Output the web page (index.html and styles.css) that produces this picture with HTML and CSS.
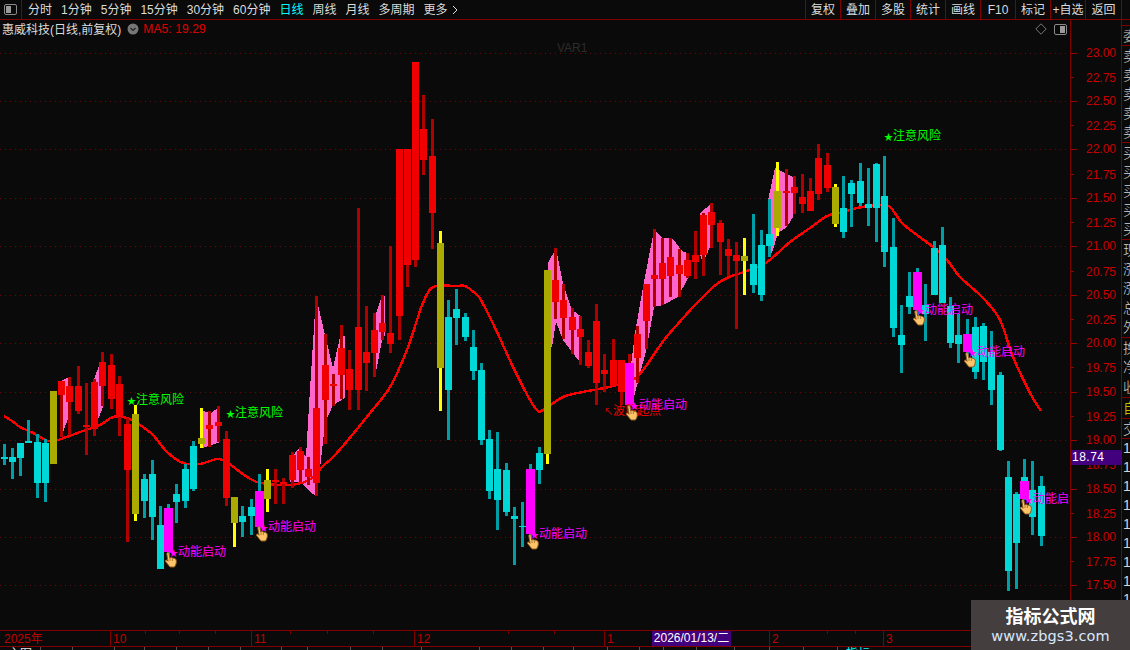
FILE: index.html
```html
<!DOCTYPE html>
<html lang="zh-CN">
<head>
<meta charset="utf-8">
<title>惠威科技 日线</title>
<link rel="stylesheet" href="styles.css">
</head>
<body>
<div class="app">
  <header class="toolbar">
    <div class="tb-icon">
      <svg class="panel-icon" viewBox="0 0 13 11"><rect x="0.5" y="0.5" width="12" height="10" rx="1.5" fill="none" stroke="#8a8a8a"/><rect x="2" y="2" width="5" height="7" fill="#9a9a9a"/></svg>
    </div>
    <nav class="periods">
      <span>分时</span><span>1分钟</span><span>5分钟</span><span>15分钟</span><span>30分钟</span><span>60分钟</span><span class="active">日线</span><span>周线</span><span>月线</span><span>多周期</span><span>更多 <svg class="more" viewBox="0 0 6 10"><path d="M1 1l4 4-4 4" fill="none" stroke="#ddd"/></svg></span>
    </nav>
    <nav class="actions">
      <span>复权</span><span>叠加</span><span>多股</span><span>统计</span><span>画线</span><span>F10</span><span>标记</span><span>+自选</span><span>返回</span>
    </nav>
  </header>

  <main class="main">
    <section class="chart">
      <svg id="plot" class="plot" viewBox="0 20 1070 610" shape-rendering="crispEdges">
        <defs>
          <g id="hand">
            <path d="M3 1C3.8 0 5 .4 5 1.5L5.6 6 7 5.6 8.4 6 10 6.2 11.6 7C12.6 8 12.6 11 11.6 13L10.5 15H6L4 12.5 1.5 9.5C1 8.5 2 7.5 3 8.3L4 9.3 2.8 2Z" fill="#ffc46a" stroke="#8a5a20" shape-rendering="auto"/>
            <path d="M6 6.5V9M8.4 6.5V9" stroke="#b07830" fill="none" shape-rendering="auto"/>
          </g>
        </defs>
        <g id="layer-back"></g>
        <g id="layer-candles"></g>
        <g class="labels" text-rendering="auto">
          <text class="var">VAR1</text>
          <text class="risk lb1"><tspan class="star">★</tspan>注意风险</text>
          <text class="risk lb2"><tspan class="star">★</tspan>注意风险</text>
          <text class="risk lb3"><tspan class="star">★</tspan>注意风险</text>
          <text class="wave"><tspan class="arrow">↖</tspan>波段起点</text>
          <text class="power lp1"><tspan class="star">★</tspan>动能启动</text>
          <text class="power lp2"><tspan class="star">★</tspan>动能启动</text>
          <text class="power lp3"><tspan class="star">★</tspan>动能启动</text>
          <text class="power lp4"><tspan class="star">★</tspan>动能启动</text>
          <text class="power lp5"><tspan class="star">★</tspan>动能启动</text>
          <text class="power lp6"><tspan class="star">★</tspan>动能启动</text>
          <text class="power lp7"><tspan class="star">★</tspan>动能启动</text>
        </g>
        <g id="layer-hands"></g>
      </svg>
      <div class="legend">
        <span class="name">惠威科技(日线,前复权)</span>
        <svg class="chev" viewBox="0 0 12 12"><circle cx="6" cy="6" r="5.5" fill="#777"/><path d="M3.5 5l2.5 2.5L8.5 5" fill="none" stroke="#222" stroke-width="1.2"/></svg>
        <span class="ma">MA5: 19.29</span>
      </div>
      <div class="corner-tools">
        <svg class="diamond" viewBox="0 0 12 12"><path d="M6 .8L11.2 6 6 11.2.8 6Z" fill="none" stroke="#777"/></svg>
        <svg class="panel-icon" viewBox="0 0 13 11"><rect x="0.5" y="0.5" width="12" height="10" rx="1.5" fill="none" stroke="#8a8a8a"/><rect x="6" y="2" width="5" height="7" fill="#9a9a9a"/></svg>
      </div>
    </section>

    <section class="axis">
      <svg id="axis" class="axis-svg" viewBox="1070 20 51 610" shape-rendering="crispEdges"></svg>
      <div class="last-price">18.74</div>
    </section>

    <aside class="quotes">
      <div class="q q0"></div>
      <div class="q q1"><span>委比</span></div>
      <div class="q q2"><span>卖五</span><span>卖四</span><span>卖三</span><span>卖二</span><span>卖一</span></div>
      <div class="q q3"><span>买一</span><span>买二</span><span>买三</span><span>买四</span><span>买五</span></div>
      <div class="q q4"><span>现价</span><span>涨跌</span><span>涨幅</span><span>总手</span><span>外盘</span></div>
      <div class="q q5"><span>换手</span><span>净资</span><span>收益</span></div>
      <div class="q q6 yellow"><span>自选</span></div>
      <div class="q q7"><span>交易</span></div>
      <div class="q q8"><span>14</span><span>14</span><span>14</span><span>14</span><span>14</span><span>14</span><span>14</span><span>14</span><span>14</span></div>
    </aside>
  </main>

  <footer class="timebar">
    <svg class="time-ticks" viewBox="0 0 1130 4" shape-rendering="crispEdges"><path d="M145 0v3M179 0v3M215 0v3M290 0v3M327 0v3M373 0v3M508 0v3M554 0v3M827 0v3M855 0v3" stroke="#800000"/></svg>
    <span class="m m-y">2025年</span>
    <span class="m m-10">10</span>
    <span class="m m-11">11</span>
    <span class="m m-12">12</span>
    <span class="m m-1">1</span>
    <span class="m-date">2026/01/13/二</span>
    <span class="m m-gap"></span>
    <span class="m m-2">2</span>
    <span class="m m-3">3</span>
  </footer>
  <div class="tabs">
    <span class="t w41">主图</span><span class="t w32"></span><span class="t w42"></span><span class="t w30"></span><span class="t w32"></span><span class="t w32"></span><span class="t w32"></span><span class="t w41"></span><span class="t w26"></span><span class="t w43"></span><span class="t w32"></span><span class="t w39"></span><span class="t w58"></span><span class="t w32"></span><span class="t w32"></span><span class="t w30"></span><span class="t w34"></span><span class="t w32"></span><span class="t w24"></span><span class="t w33"></span><span class="t w38"></span><span class="t w35"></span><span class="t w34"></span><span class="t w34"></span><span class="t cy">指标</span>
  </div>

  <div class="watermark">
    <strong>指标公式网</strong>
    <span>www.zbgs3.com</span>
  </div>
</div>
<script src="script.js"></script>
</body>
</html>
```

FILE: styles.css
```css
* { box-sizing: border-box; }
html, body { margin: 0; padding: 0; background: #0a0a0a; }
body {
  width: 1130px; height: 650px; overflow: hidden;
  font: 12px "Liberation Sans", "Noto Sans CJK SC", sans-serif;
  color: #dcdcdc;
}
.app { position: relative; display: flex; flex-direction: column; width: 1130px; height: 650px; background: #0a0a0a; }

.toolbar { display: flex; height: 20px; flex: none; border-bottom: 1px solid #800000; line-height: 20px; }
.tb-icon { width: 22px; border-right: 1px solid #800000; display: flex; align-items: center; justify-content: center; }
.panel-icon { width: 13px; height: 11px; display: block; }
.periods { display: flex; gap: 9px; padding-left: 6px; white-space: nowrap; }
.periods .active { color: #00ffff; }
.more { width: 6px; height: 10px; margin-left: 1px; vertical-align: -1px; }
.actions { display: flex; margin-left: auto; margin-right: 8px; }
.actions span { width: 35px; text-align: center; border-left: 1px solid #800000; white-space: nowrap; }
.actions span:last-child { width: 37px; border-right: 1px solid #800000; }

.main { display: flex; height: 610px; flex: none; }
.chart { position: relative; width: 1070px; flex: none; overflow: hidden; }
.plot { display: block; width: 1070px; height: 610px; }
.legend { position: absolute; left: 2px; top: 0; display: flex; align-items: center; height: 17px; white-space: nowrap; }
.chev { width: 12px; height: 12px; margin-left: 6px; }
.ma { margin-left: 4px; color: #e00000; letter-spacing: .1px; }
.corner-tools { position: absolute; right: 3px; top: 3px; display: flex; align-items: center; gap: 7px; }
.diamond { width: 12px; height: 12px; }

.labels text { font-family: "Liberation Sans", "Noto Sans CJK SC", sans-serif; font-size: 12px; }
.labels .star { font-family: "Noto Sans CJK SC", sans-serif; font-size: 9px; }
.labels .arrow { font-size: 9px; }
.var { fill: #2c2c2c; transform: translate(557px, 52px); }
.risk { fill: #00ff00; }
.power { fill: #ff00ff; }
.wave { fill: #f00000; transform: translate(604px, 415px); }
.lb1 { transform: translate(127px, 404px); }
.lb2 { transform: translate(226px, 417px); }
.lb3 { transform: translate(884px, 140px); }
.lp1 { transform: translate(169px, 556px); }
.lp2 { transform: translate(259px, 531px); }
.lp3 { transform: translate(530px, 538px); }
.lp4 { transform: translate(630px, 409px); }
.lp5 { transform: translate(916px, 314px); }
.lp6 { transform: translate(968px, 356px); }
.lp7 { transform: translate(1024px, 503px); }

.axis { position: relative; width: 52px; flex: none; border-left: 1px solid #800000; border-right: 1px solid #800000; }
.axis-svg { display: block; width: 51px; height: 610px; }
.axis-svg text { font-family: "Liberation Sans", sans-serif; font-size: 12px; fill: #c80000; }
.last-price { position: absolute; left: 0; right: 0; top: 430px; height: 15px; background: #42007e; color: #fff; line-height: 15px; padding-left: 1px; letter-spacing: .5px; }

.quotes { width: 8px; flex: none; overflow: hidden; display: flex; flex-direction: column; font-size: 14px; color: #d4d4d4; white-space: nowrap; font-weight: 300; }
.q { display: flex; flex-direction: column; justify-content: space-around; border-bottom: 1px solid #800000; overflow: hidden; line-height: 16px; padding-left: 1px; flex: none; }
.q0 { height: 6px; }
.q1 { height: 20px; }
.q2, .q3 { height: 97px; }
.q4 { height: 98px; }
.q5 { height: 60px; }
.q6 { height: 21px; }
.q7 { height: 20px; }
.q8 { height: 170px; border-bottom: 0; }
.yellow { color: #e0e000; }

.timebar { position: relative; display: flex; height: 17px; flex: none; border-top: 1px solid #800000; border-bottom: 1px solid #800000; line-height: 16px; color: #c00000; }
.time-ticks { position: absolute; left: 0; top: 0; width: 1130px; height: 4px; }
.m { display: block; padding-left: 2px; border-left: 1px solid #800000; flex: none; }
.m-y { width: 110px; border-left: 0; padding-left: 4px; }
.m-10 { width: 141px; }
.m-11 { width: 163px; }
.m-12 { width: 190px; }
.m-1 { width: 48px; }
.m-date { width: 79px; flex: none; background: #42007e; color: #fff; text-align: center; white-space: nowrap; overflow: hidden; line-height: 15px; }
.m-gap { width: 38px; border-left: 0; }
.m-2 { width: 114px; }
.m-3 { width: 88px; }

.tabs { display: flex; height: 3px; flex: none; overflow: hidden; font-size: 12px; line-height: 14px; color: #e6e6e6; }
.t { border-right: 1px solid #555; flex: none; padding-left: 8px; overflow: hidden; }
.t.cy { color: #00ffff; border-right: 0; }
.w24 { width: 24px; } .w26 { width: 26px; } .w30 { width: 30px; } .w32 { width: 32px; } .w33 { width: 33px; }
.w34 { width: 34px; } .w35 { width: 35px; } .w38 { width: 38px; } .w39 { width: 39px; } .w41 { width: 41px; }
.w42 { width: 42px; } .w43 { width: 43px; } .w58 { width: 58px; }

.watermark { position: absolute; left: 971px; top: 600px; width: 159px; height: 50px; background: #443e3e; display: flex; flex-direction: column; align-items: center; padding-top: 3px; color: #fff; }
.watermark strong { font: 700 18px/24px "Noto Sans CJK SC", sans-serif; color: #fff; }
.watermark span { font: 14.5px/18px "DejaVu Sans", sans-serif; color: #d8e8ff; letter-spacing: .1px; }
```

FILE: script.js
```js
// [centre x, wick top, wick bottom, body top, body bottom, kind]
// kinds: r red, c cyan, o olive with yellow wick, m magenta with teal wick, n magenta with red wick
var CANDLES = [
[4.7,444,465,457,459,'c'],[12.3,448,479,457,462,'c'],[20.3,443,476,443,458,'c'],[28.3,420,443,441,443,'c'],
[37.3,434,498,442,483,'c'],[45.3,439,502,443,483,'c'],[53.3,391,464,391,464,'o'],[61.3,381,437,381,395,'r'],
[69.3,377,435,386,402,'r'],[78.3,366,414,386,411,'r'],[86.3,383,455,425,427,'r'],[94.3,379,436,382,429,'r'],
[102.3,352,406,362,386,'r'],[111.3,354,409,365,399,'r'],[119.3,376,436,384,417,'r'],[127.3,418,542,424,470,'r'],
[135.3,405,521,414,514,'o'],[144.3,474,518,479,501,'c'],[152.3,460,540,474,517,'c'],[160.3,506,569,525,569,'c'],
[168.5,504,560,508,552,'m'],[176.3,484,523,494,502,'c'],[185.3,464,508,469,501,'c'],[193.3,441,491,446,489,'c'],
[201.3,408,448,438,444,'o'],[209.3,411,447,425,429,'r'],[218.3,406,442,422,426,'r'],[226.3,431,506,439,498,'r'],
[234.3,497,547,497,523,'o'],[242.3,506,537,516,522,'c'],[251.3,499,535,507,516,'c'],[259.5,474,527,491,527,'m'],
[267.3,469,512,480,499,'o'],[275.3,469,504,480,482,'r'],[283.3,478,504,482,484,'r'],[292.3,452,488,455,480,'r'],
[300.3,447,482,451,470,'r'],[308.3,457,485,469,477,'r'],[316.3,296,496,408,483,'r'],[325.3,334,444,365,400,'r'],
[333.3,374,406,384,386,'r'],[341.3,325,399,348,375,'r'],[349.3,350,410,369,390,'r'],[358.3,208,410,327,390,'r'],
[366.3,306,391,352,363,'r'],[374.3,313,377,330,353,'r'],[382.3,295,340,323,332,'r'],[390.3,246,353,333,344,'r'],
[399,149,340,149,316,'r'],[407,149,287,149,265,'r'],[415,62,267,62,260,'r'],[423,95,175,129,160,'r'],
[432.5,119,249,156,213,'r'],[440.5,231,411,243,368,'o'],[448.5,300,440,317,390,'c'],[456.5,289,345,309,318,'c'],
[465.5,313,341,317,337,'c'],[473.5,330,380,347,371,'c'],[481.5,363,445,370,440,'c'],[489.5,430,499,439,491,'c'],
[497.5,432,530,469,500,'c'],[506.5,463,516,470,512,'c'],[514.5,507,565,516,519,'c'],[522.5,502,547,526,527,'c'],
[530.5,464,540,469,534,'m'],[539.5,447,484,453,470,'c'],[547.5,270,464,270,454,'o'],[555.7,248,319,280,302,'r'],
[563.3,284,339,300,318,'r'],[572.3,308,354,317,330,'r'],[580.3,316,365,329,337,'r'],[588.3,340,368,352,366,'r'],
[596.3,304,405,321,383,'r'],[604.3,354,392,370,374,'r'],[613.3,339,386,360,386,'r'],[621.3,360,405,360,392,'r'],
[629.3,354,412,363,405,'n'],[637.3,326,383,334,358,'r'],[646.3,284,349,284,321,'r'],[654.3,229,307,275,279,'r'],
[662.3,238,305,263,279,'r'],[670.3,238,297,257,276,'r'],[679.3,249,297,265,274,'r'],[687.3,253,278,260,276,'r'],
[695.3,231,279,255,262,'r'],[703.3,213,276,215,255,'r'],[711.3,203,248,212,225,'r'],[720.3,220,275,223,242,'r'],
[728.3,239,276,249,256,'r'],[736.3,242,329,255,261,'r'],[744.3,238,295,256,261,'o'],[753.3,214,293,264,285,'c'],
[761.3,230,301,245,295,'c'],[769.3,199,257,234,246,'c'],[777.3,162,236,191,228,'o'],[786.3,169,226,191,193,'r'],
[794.3,176,214,187,193,'r'],[802.3,174,213,197,204,'r'],[810.3,178,211,191,211,'r'],[818.3,144,200,158,194,'r'],
[827.3,153,192,165,188,'r'],[835.3,184,227,187,224,'o'],[843.3,176,238,208,232,'c'],[851.3,180,227,183,194,'c'],
[860.3,163,206,181,203,'c'],[868.3,168,226,204,208,'c'],[876.3,163,242,164,208,'c'],[884.3,156,267,196,252,'c'],
[893.3,218,337,247,328,'c'],[901.3,305,373,335,345,'c'],[909.3,272,314,296,307,'c'],[917.3,268,320,272,310,'m'],
[925.3,284,341,305,314,'c'],[934.3,241,295,248,295,'c'],[942.3,227,303,245,303,'c'],[950.3,297,348,306,343,'c'],
[958.3,314,363,335,344,'c'],[967.5,319,360,334,352,'m'],[975.3,317,379,327,372,'c'],[983.3,323,380,326,362,'c'],
[991.3,331,405,352,390,'c'],[1000.3,372,451,375,450,'c'],[1008.3,461,591,477,571,'c'],[1016.3,492,589,494,543,'c'],
[1024.3,459,500,477,499,'c'],[1024.5,481,499,481,499,'m'],[1032.3,461,535,490,517,'c'],[1041.3,476,546,486,536,'c']
];

var PINK = [
'61,381 69,377 70,378 70,414 61,437',
'94,379 102,358 103,358 103,407 94,430',
'203,411 211,413 219,407 220,407 220,442 211,445 203,448',
'290,459 295,453 300,447 306,457 309,405 316,296 325,335 333,368 340,337 345,336 345,398 333,405 325,423 317,496 311,493 300,482 290,482',
'373,322 382,296 385,296 385,335 382,340 376,372 373,372',
'548,263 556,248 563,283 572,310 582,317 582,365 572,352 563,340 556,322 552,347 548,347',
'630,373 635,333 643,287 654,230 662,238 672,238 683,252 688,253 688,278 678,297 663,305 654,307 647,347 638,382 633,400',
'700,213 712,203 712,230 710,247 703,263 700,255',
'768,200 775,168 793,177 793,217 787,227 778,233 772,253 768,253'
];

var MA = [[4,416],[12,421],[20,427],[33,433],[48,441],[58,440],[80,432],[100,425],[113,417],[127,418],[140,425],[153,435],[167,452],[183,463],[200,464],[217,459],[227,462],[240,472],[257,482],[283,485],[302,483],[315,476],[322,467],[333,457],[348,440],[370,413],[390,387],[407,350],[417,320],[423,303],[433,287],[457,286],[465,286],[477,295],[482,302],[497,332],[513,367],[530,400],[538,411],[543,410],[563,397],[583,392],[613,386],[637,377],[668,335],[710,290],[727,278],[747,271],[767,262],[790,242],[810,228],[827,216],[840,213],[857,208],[880,205],[890,207],[902,223],[917,235],[933,247],[947,260],[960,277],[983,298],[1000,320],[1013,357],[1030,393],[1041,411]];

var HANDS = [[164,552],[255,526],[526,534],[625,405],[912,310],[963,352],[1019,499]];

var NS = 'http://www.w3.org/2000/svg';
function el(parent, name, attrs, text) {
  var n = document.createElementNS(NS, name);
  for (var k in attrs) n.setAttribute(k, attrs[k]);
  if (text) n.textContent = text;
  parent.appendChild(n);
  return n;
}
function rect(p, x, y, w, h, fill) {
  el(p, 'rect', { x: x, y: y, width: w, height: Math.max(h, 1), fill: fill });
}
// Catmull-Rom spline through the moving-average samples
function smooth(pts) {
  var d = 'M' + pts[0][0] + ' ' + pts[0][1];
  for (var i = 0; i < pts.length - 1; i++) {
    var p0 = pts[i - 1] || pts[i], p1 = pts[i], p2 = pts[i + 1], p3 = pts[i + 2] || p2;
    d += 'C' + (p1[0] + (p2[0] - p0[0]) / 6) + ' ' + (p1[1] + (p2[1] - p0[1]) / 6) + ' ' +
         (p2[0] - (p3[0] - p1[0]) / 6) + ' ' + (p2[1] - (p3[1] - p1[1]) / 6) + ' ' + p2[0] + ' ' + p2[1];
  }
  return d;
}

var back = document.getElementById('layer-back');
var candles = document.getElementById('layer-candles');
var hands = document.getElementById('layer-hands');
var axis = document.getElementById('axis');

function priceY(p) { return Math.round(52.5 + (23 - p) * 96.9); }

// grid + axis scale
for (var i = 0; i < 23; i++) {
  var p = 23 - i * 0.25, y = priceY(p);
  if (i % 2 === 0) {
    el(back, 'line', { x1: 0, x2: 1070, y1: y + 0.5, y2: y + 0.5, stroke: '#6a0808', 'stroke-dasharray': '1 4' });
  }
  rect(axis, 1070, y, i % 2 === 0 ? 6 : 3, 1, '#a00000');
  el(axis, 'text', { x: 1085, y: y + 4 + (i % 2 ? 1 : 0), 'text-rendering': 'auto' }, p.toFixed(2));
}

PINK.forEach(function (pts) { el(back, 'polygon', { points: pts, fill: '#ff66cc' }); });
el(back, 'path', { d: smooth(MA), fill: 'none', stroke: '#ff0000', 'stroke-width': 2.4 });

var COLORS = {
  r: ['#b00000', '#f00000', 7], c: ['#009ea6', '#00d8d8', 7], o: ['#ffff00', '#aaaa00', 7],
  m: ['#009ea6', '#ff00ff', 9], n: ['#b00000', '#ff00ff', 9]
};
CANDLES.forEach(function (c) {
  var k = COLORS[c[5]], w = k[2], left = Math.round(c[0] - w / 2);
  rect(candles, left + (w - 3) / 2, c[1], 3, c[2] - c[1], k[0]);
  rect(candles, left, c[3], w, c[4] - c[3], k[1]);
});

HANDS.forEach(function (h) {
  el(hands, 'use', { href: '#hand', transform: 'translate(' + h[0] + ' ' + h[1] + ')' });
});
```
